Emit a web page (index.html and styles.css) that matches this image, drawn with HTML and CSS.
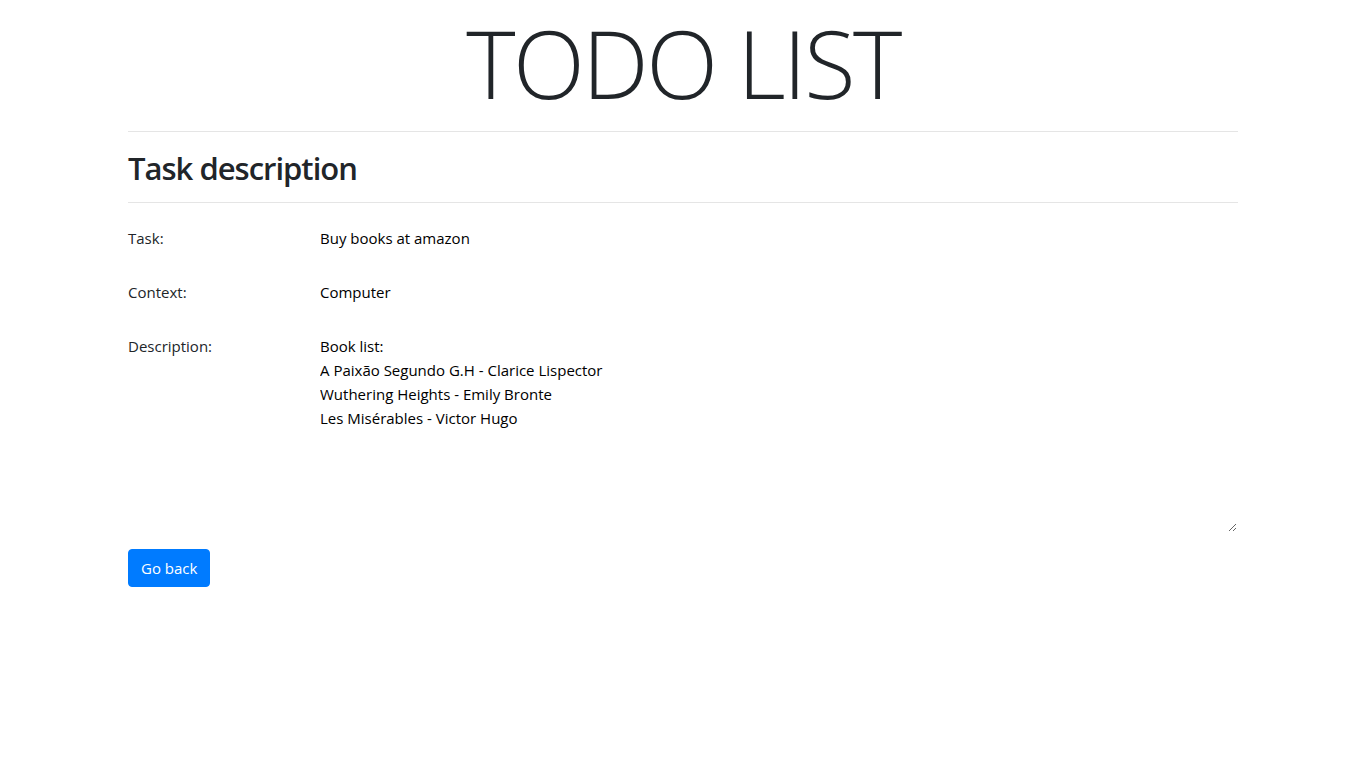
FILE: index.html
```html
<!DOCTYPE html>
<html lang="en">
<head>
<meta charset="utf-8">
<title>TODO LIST</title>
<link rel="stylesheet" href="styles.css">
</head>
<body>
<div class="container">
  <h1 class="title">TODO LIST</h1>
  <hr class="rule rule-top">
  <h2 class="section-title">Task description</h2>
  <hr class="rule rule-bottom">
  <form class="details">
    <div class="row">
      <label class="label">Task:</label>
      <div class="value">Buy books at amazon</div>
    </div>
    <div class="row">
      <label class="label">Context:</label>
      <div class="value">Computer</div>
    </div>
    <div class="row">
      <label class="label" for="desc">Description:</label>
      <textarea id="desc" class="value area" rows="8" readonly>Book list:
A Paixão Segundo G.H - Clarice Lispector
Wuthering Heights - Emily Bronte
Les Misérables - Victor Hugo</textarea>
    </div>
    <button type="button" class="btn">Go back</button>
  </form>
</div>
</body>
</html>
```
FILE: styles.css
```css
* { box-sizing: border-box; }
body {
  margin: 0;
  font-family: "Open Sans", "Noto Sans", sans-serif;
  font-size: 15px;
  line-height: 1.5;
  color: #212529;
  background: #fff;
}
.container {
  width: 1140px;
  margin: 0 auto;
  padding: 0 15px;
}
.title {
  margin: 0;
  font-size: 94px;
  font-weight: 300;
  line-height: 126px;
  letter-spacing: -2.5px;
  text-align: center;
}
.rule {
  margin: 16px 0;
  border: 0;
  border-top: 1px solid rgba(0,0,0,0.1);
}
.rule-top { margin-top: 5px; }
.section-title {
  margin: 0;
  font-size: 31px;
  font-weight: 600;
  line-height: 1.2;
  letter-spacing: -1px;
  padding-top: 2px;
}
.rule-bottom { margin-top: 15px; }
.row {
  display: grid;
  grid-template-columns: 192px 1fr;
  margin-bottom: 16px;
}
.label {
  padding: 7px 0;
  line-height: 24px;
  font-size: 15px;
}
.value {
  padding: 7px 0;
  line-height: 24px;
  font-size: 15px;
  color: #000;
}
.area {
  font-family: inherit;
  border: 1px solid transparent;
  border-left: 0;
  padding: 6px 0;
  margin: 0;
  background: transparent;
  outline: none;
  resize: vertical;
  height: 206px;
}
.btn {
  display: inline-block;
  font-family: inherit;
  font-size: 15px;
  line-height: 24px;
  padding: 6px 12px;
  color: #fff;
  background: #007bff;
  border: 1px solid #007bff;
  border-radius: 4px;
  cursor: pointer;
}
```
